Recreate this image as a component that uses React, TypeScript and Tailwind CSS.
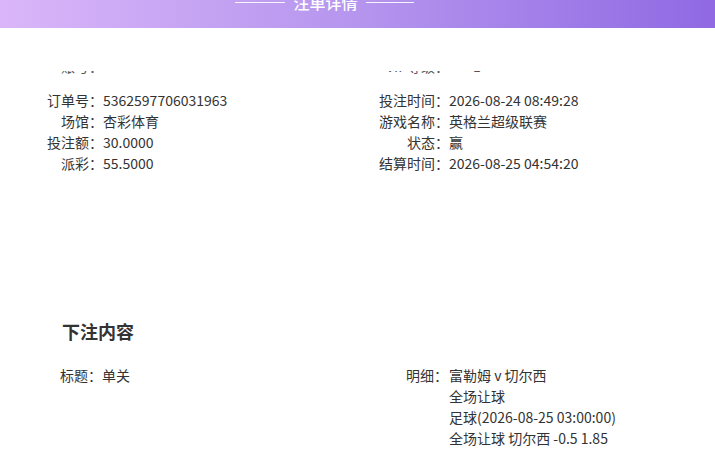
import React from "react";

const font = { fontFamily: '"Noto Sans CJK SC", "Noto Sans", sans-serif' };

type Row = { label: string; value: string };

const leftRows: Row[] = [
  { label: "订单号：", value: "5362597706031963" },
  { label: "场馆：", value: "杏彩体育" },
  { label: "投注额：", value: "30.0000" },
  { label: "派彩：", value: "55.5000" },
];

const rightRows: Row[] = [
  { label: "投注时间：", value: "2026-08-24 08:49:28" },
  { label: "游戏名称：", value: "英格兰超级联赛" },
  { label: "状态：", value: "赢" },
  { label: "结算时间：", value: "2026-08-25 04:54:20" },
];

function InfoRow({ row, labelW }: { row: Row; labelW: string }) {
  return (
    <div className="flex h-[21px] items-center">
      <span className={`${labelW} shrink-0 text-right`}>{row.label}</span>
      <span>{row.value}</span>
    </div>
  );
}

export default function App() {
  return (
    <div
      className="w-[715px] h-[465px] overflow-hidden bg-white text-[14px] text-[#333333]"
      style={font}
    >
      {/* Title bar */}
      <div className="h-[28px] bg-gradient-to-r from-[#dab6f9] via-[#b595ee] to-[#9069e3] flex justify-center pr-[66px] overflow-hidden">
        <div className="-mt-[9px] h-[22px] flex items-center gap-[8px] text-white">
          <span className="w-[50px] h-px bg-white/90" />
          <span className="text-[16px] leading-[22px] font-medium">注单详情</span>
          <span className="w-[48px] h-px bg-white/90" />
        </div>
      </div>

      {/* Order info */}
      <div className="pt-[43px]">
        {/* first row, scrolled mostly out of view */}
        <div className="h-[6px] overflow-hidden text-[#555]">
          <div className="-mt-[15px] flex">
            <div className="w-[378px] pl-[46px] flex h-[21px] items-center">
              <span className="w-[57px] text-right">账号：</span>
              <span className="text-[#aaa]">- -</span>
            </div>
            <div className="flex h-[21px] items-center">
              <span className="w-[71px] text-right">VIP等级：</span>
              <span className="pl-[24px]">1</span>
            </div>
          </div>
        </div>
        <div className="flex pt-[13px]">
          <div className="w-[378px] pl-[46px]">
            {leftRows.map((r) => (
              <InfoRow key={r.label} row={r} labelW="w-[57px]" />
            ))}
          </div>
          <div>
            {rightRows.map((r) => (
              <InfoRow key={r.label} row={r} labelW="w-[71px]" />
            ))}
          </div>
        </div>
      </div>

      {/* Bet content */}
      <div className="pt-[145px] pl-[62px]">
        <h2 className="text-[18px] font-bold leading-[24px] text-[#333333]">下注内容</h2>
      </div>
      <div className="flex pt-[22px]">
        <div className="w-[406px] pl-[60px]">
          <div className="h-[21px] flex items-center">标题：单关</div>
        </div>
        <div className="flex">
          <span className="h-[21px] flex items-center w-[43px]">明细：</span>
          <div>
            <div className="h-[21px] flex items-center">富勒姆 v 切尔西</div>
            <div className="h-[21px] flex items-center">全场让球</div>
            <div className="h-[21px] flex items-center">足球(2026-08-25 03:00:00)</div>
            <div className="h-[21px] flex items-center">全场让球 切尔西 -0.5 1.85</div>
          </div>
        </div>
      </div>
    </div>
  );
}
